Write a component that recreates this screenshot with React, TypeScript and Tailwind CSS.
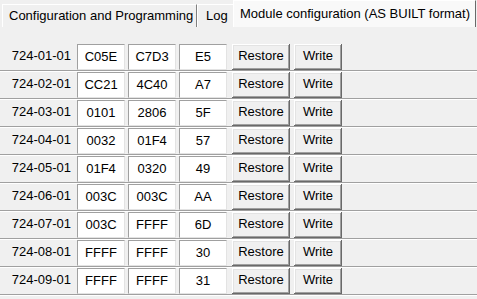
import React from "react";

const rows = [
  ["724-01-01", "C05E", "C7D3", "E5"],
  ["724-02-01", "CC21", "4C40", "A7"],
  ["724-03-01", "0101", "2806", "5F"],
  ["724-04-01", "0032", "01F4", "57"],
  ["724-05-01", "01F4", "0320", "49"],
  ["724-06-01", "003C", "003C", "AA"],
  ["724-07-01", "003C", "FFFF", "6D"],
  ["724-08-01", "FFFF", "FFFF", "30"],
  ["724-09-01", "FFFF", "FFFF", "31"],
];

function Box({ v, first }: { v: string; first?: boolean }) {
  return (
    <div
      className={`${first ? "ml-[5px]" : "ml-[3px]"} w-[48px] h-[26px] bg-white border-t border-l border-t-[#a0a0a0] border-l-[#a0a0a0] border-b border-r border-b-[#e3e3e3] border-r-[#e3e3e3] text-center leading-[23px] text-black`}
    >
      {v}
    </div>
  );
}

function Btn({ label, w, ml }: { label: string; w: string; ml: string }) {
  return (
    <div
      className={`${ml} ${w} h-[26px] bg-[#f0f0f0] text-center leading-[24px] text-black shadow-[inset_-1px_-1px_0_#696969,inset_1px_1px_0_#ffffff,inset_-2px_-2px_0_#a0a0a0,inset_2px_2px_0_#e3e3e3]`}
    >
      {label}
    </div>
  );
}

export default function App() {
  return (
    <div
      className="w-[477px] h-[299px] overflow-hidden bg-[#f0f0f0] text-[13px] text-black"
      style={{ fontFamily: '"Liberation Sans", Arial, sans-serif' }}
    >
      <div className="flex items-end h-[27px]">
        <div className="ml-[2px] w-[195px] h-[23px] border-t border-l border-t-white border-l-white border-r border-r-[#808080] pl-[6px] leading-[21px] whitespace-nowrap">
          Configuration and Programming
        </div>
        <div className="w-[36px] h-[23px] border-t border-l border-t-white border-l-white pl-[8px] leading-[21px]">
          Log
        </div>
        <div className="w-[243px] h-[27px] bg-[#f9f9f9] border-t border-l border-t-white border-l-white border-r border-r-[#696969] pl-[6px] leading-[26px] whitespace-nowrap">
          Module configuration (AS BUILT format)
        </div>
      </div>
      <div className="mt-[17px] flex flex-col">
        {rows.map((r) => (
          <div key={r[0]} className="flex flex-col">
            <div className="flex items-start h-[26px]">
              <div className="w-[72px] text-right leading-[23px] pr-[1px]">{r[0]}</div>
              <Box v={r[1]} first />
              <Box v={r[2]} />
              <Box v={r[3]} />
              <Btn label="Restore" w="w-[58px]" ml="ml-[5px]" />
              <Btn label="Write" w="w-[48px]" ml="ml-[4px]" />
            </div>
            <div className="h-px bg-[#a0a0a0]" />
            <div className="h-px bg-white" />
          </div>
        ))}
      </div>
    </div>
  );
}
